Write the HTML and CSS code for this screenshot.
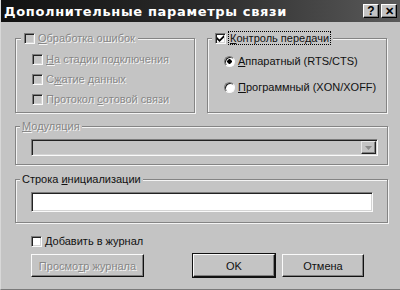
FILE: index.html
```html
<!DOCTYPE html>
<html lang="ru">
<head>
  <meta charset="UTF-8" />
  <title>Дополнительные параметры связи</title>
  <link rel="stylesheet" href="styles.css">
</head>
<body>
  <div class="dialog">
    <div class="titlebar">
      <span class="title">Дополнительные параметры связи</span>
      <span class="tbtn">?</span>
      <span class="tbtn close">✕</span>
    </div>

    <div class="content">
      <div class="row-top">
        <div class="group g-errors">
          <div class="legend disabled"><span class="cb off"></span><span><u>О</u>бработка ошибок</span></div>
          <div class="item disabled"><span class="cb off"></span><span><u>Н</u>а стадии подключения</span></div>
          <div class="item disabled"><span class="cb off"></span><span>С<u>ж</u>атие данных</span></div>
          <div class="item disabled"><span class="cb off"></span><span>Протокол <u>с</u>отовой связи</span></div>
        </div>
        <div class="group g-flow">
          <div class="legend"><span class="cb checked">
            <svg width="7" height="7" viewBox="0 0 7 7"><path d="M0 2 L2.5 4.5 L7 0 L7 2.5 L2.5 7 L0 4.5 Z" fill="#000"/></svg>
          </span><span class="focus"><u>К</u>онтроль передачи</span></div>
          <div class="item radio-item"><span class="rb on"></span><span><u>А</u>ппаратный (RTS/CTS)</span></div>
          <div class="item radio-item"><span class="rb"></span><span><u>П</u>рограммный (XON/XOFF)</span></div>
        </div>
      </div>

      <div class="group g-mod">
        <div class="legend disabled"><span><u>М</u>одуляция</span></div>
        <div class="combo">
          <span class="combo-btn"><svg width="7" height="4" viewBox="0 0 7 4"><path d="M0 0 H7 L3.5 4 Z" fill="#8a8a8a"/></svg></span>
        </div>
      </div>

      <div class="group g-init">
        <div class="legend"><span>Строка <u>и</u>нициализации</span></div>
        <div class="textbox"></div>
      </div>

      <div class="log-row"><span class="cb"></span><span><u>Д</u>обавить в журнал</span></div>

      <div class="buttons">
        <span class="btn disabled">Просмо<u>т</u>р журнала</span>
        <span class="btn default">OK</span>
        <span class="btn">Отмена</span>
      </div>
    </div>
  </div>
</body>
</html>
```
FILE: styles.css
```css
body {
  margin: 0;
  font-family: 'Liberation Sans', Arial, sans-serif;
  font-size: 11px;
  color: #111;
}
.dialog {
  width: 400px;
  height: 290px;
  background-color: #c4c4c4;
  box-sizing: border-box;
  border-left: 1px solid #d8d8d8;
  border-bottom: 1px solid #7a7a7a;
  overflow: hidden;
}
u {
  text-decoration: underline;
  text-underline-offset: 1px;
}

/* title bar */
.titlebar {
  height: 22px;
  display: flex;
  align-items: center;
  padding: 0 3px 0 3px;
  background: linear-gradient(to right, #121212, #2a2a2a 50%, #5a5a5a);
}
.title {
  flex: 1;
  color: #fff;
  font-family: 'DejaVu Sans', sans-serif;
  font-weight: bold;
  font-size: 13px;
  letter-spacing: 0.65px;
}
.tbtn {
  width: 16px;
  height: 14px;
  box-sizing: border-box;
  margin-left: 1px;
  background-color: #c4c4c4;
  border: 1px solid;
  border-color: #fff #000 #000 #fff;
  box-shadow: inset -1px -1px 0 #808080;
  font-weight: bold;
  font-size: 12px;
  line-height: 12px;
  text-align: center;
  color: #000;
}
.tbtn.close {
  margin-left: 2px;
  font-size: 11px;
}

/* content */
.content {
  padding: 16px 12px 0 14px;
}
.row-top {
  display: flex;
  gap: 12px;
}
.group {
  border: 1px solid #848484;
  box-shadow: inset 1px 1px 0 #f4f4f4, 1px 1px 0 #f4f4f4;
  box-sizing: border-box;
}
.legend {
  display: flex;
  width: fit-content;
  align-items: center;
  gap: 3px;
  height: 14px;
  margin: -8px 0 0 4px;
  padding: 0 3px;
  background-color: #c4c4c4;
}
.disabled {
  color: #878787;
  text-shadow: 1px 1px 0 #f6f6f6;
}
.item {
  display: flex;
  align-items: center;
  gap: 3px;
  height: 14px;
}
.g-errors {
  width: 180px;
  height: 75px;
  padding-left: 16px;
}
.g-errors .legend {
  margin-left: -11px;
}
.g-errors .item {
  margin-top: 6px;
}
.g-errors .legend + .item {
  margin-top: 7px;
}
.g-flow {
  width: 180px;
  height: 75px;
}
.g-flow .radio-item {
  margin: 9px 0 0 16px;
}
.g-flow .radio-item + .radio-item {
  margin-top: 12px;
}
.focus {
  outline: 1px dotted #000;
  outline-offset: 0;
  padding: 0 1px;
}

/* checkbox */
.cb {
  display: inline-flex;
  align-items: center;
  justify-content: center;
  width: 11px;
  height: 11px;
  box-sizing: border-box;
  background-color: #fff;
  border: 1px solid;
  border-color: #7c7c7c #fafafa #fafafa #7c7c7c;
  box-shadow: inset 1px 1px 0 #222, inset -1px -1px 0 #d4d4d4;
  flex-shrink: 0;
}
.cb.off {
  background-color: #c4c4c4;
}
.rb {
  display: inline-block;
  width: 11px;
  height: 11px;
  box-sizing: border-box;
  border-radius: 50%;
  background-color: #fff;
  border: 1px solid;
  border-color: #7c7c7c #fafafa #fafafa #7c7c7c;
  box-shadow: inset 1px 1px 0 #222;
  flex-shrink: 0;
}
.rb.on {
  background: radial-gradient(circle, #000 0 2px, #fff 2.5px);
}

/* modulation */
.g-mod {
  margin-top: 13px;
  height: 39px;
  padding: 0 9px 0 15px;
}
.g-mod .legend,
.g-init .legend {
  margin-left: -11px;
  padding: 0 2px;
}
.combo {
  margin-top: 6px;
  height: 17px;
  box-sizing: border-box;
  background-color: #c4c4c4;
  border: 1px solid;
  border-color: #7c7c7c #fafafa #fafafa #7c7c7c;
  box-shadow: inset 1px 1px 0 #222, inset -1px -1px 0 #d4d4d4;
  display: flex;
  justify-content: flex-end;
  padding: 1px;
}
.combo-btn {
  width: 15px;
  height: 13px;
  box-sizing: border-box;
  border: 1px solid;
  border-color: #e8e8e8 #222 #222 #e8e8e8;
  box-shadow: inset -1px -1px 0 #808080;
  display: flex;
  align-items: center;
  justify-content: center;
}

/* init string */
.g-init {
  margin-top: 14px;
  height: 44px;
  padding: 0 14px 0 15px;
}
.textbox {
  margin-top: 6px;
  height: 20px;
  box-sizing: border-box;
  background-color: #fff;
  border: 1px solid;
  border-color: #7c7c7c #fafafa #fafafa #7c7c7c;
  box-shadow: inset 1px 1px 0 #222, inset -1px -1px 0 #d4d4d4;
}

/* bottom */
.log-row {
  display: flex;
  align-items: center;
  gap: 3px;
  margin: 11px 0 0 16px;
  height: 14px;
}
.buttons {
  display: flex;
  margin: 6px 0 0 16px;
}
.btn {
  width: 82px;
  height: 23px;
  box-sizing: border-box;
  display: flex;
  align-items: center;
  justify-content: center;
  background-color: #c4c4c4;
  border: 1px solid;
  border-color: #fafafa #111 #111 #fafafa;
  box-shadow: inset -1px -1px 0 #808080;
  margin-left: 7px;
}
.btn.disabled {
  width: 113px;
  margin-left: 0;
}
.btn.default {
  margin-left: 49px;
  outline: 1px solid #111;
  outline-offset: 0;
}
```
